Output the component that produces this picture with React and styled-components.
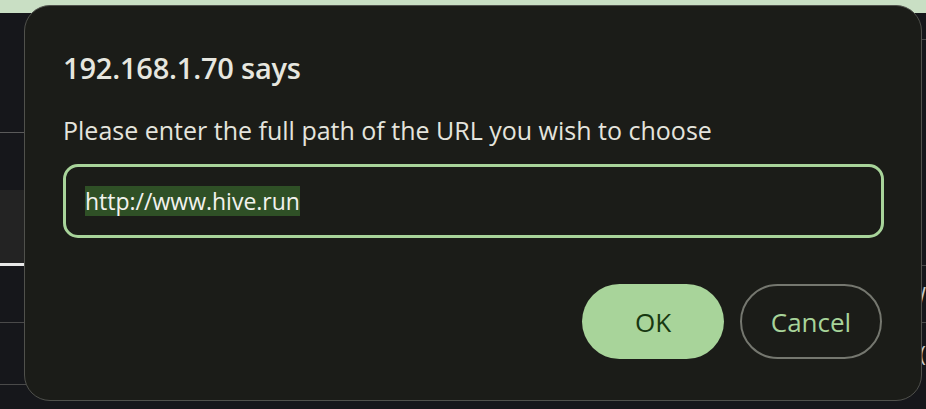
import React from 'react';
import styled, { createGlobalStyle } from 'styled-components';

const GlobalStyle = createGlobalStyle`
  html, body {
    margin: 0;
    padding: 0;
    background: #16171b;
    overflow: hidden;
  }
  body {
    font-family: 'Open Sans', 'Noto Sans', sans-serif;
  }
`;

const Page = styled.div`
  position: relative;
  width: 926px;
  height: 409px;
  display: flex;
  flex-direction: column;
  background: #16171b;
`;

const TopBand = styled.div`
  height: 13px;
  background: #c9dfc4;
`;

const Columns = styled.div`
  flex: 1;
  display: flex;
`;

const Column = styled.div`
  flex: 1;
  display: flex;
  flex-direction: column;
`;

// one row of the page lying under the dialog
const Row = styled.div`
  height: ${(p) => p.h}px;
  box-sizing: border-box;
  background: ${(p) => p.fill || 'transparent'};
  border-bottom: ${(p) => p.line || 'none'};
  display: flex;
  align-items: center;
  justify-content: flex-end;
  color: #c8c8c8;
  font-size: 22px;
`;

const Dialog = styled.div`
  position: absolute;
  left: 24px;
  top: 5px;
  width: 898px;
  height: 396px;
  box-sizing: border-box;
  background: #1b1c18;
  border: 1px solid #50514c;
  border-radius: 26px;
  padding: 42px 37px 0 38px;
  display: flex;
  flex-direction: column;
`;

const Title = styled.h1`
  margin: 0;
  font-size: 29px;
  line-height: 40px;
  font-weight: 600;
  letter-spacing: -0.2px;
  color: #e6e6df;
`;

const Message = styled.p`
  margin: 25px 0 0;
  font-size: 25px;
  line-height: 34px;
  color: #e4e4dd;
`;

const Field = styled.div`
  margin-top: 17px;
  height: 74px;
  box-sizing: border-box;
  border: 3px solid #a8d49a;
  border-radius: 15px;
  padding-left: 19px;
  display: flex;
  align-items: center;
`;

const Selected = styled.span`
  background: #2f5026;
  color: #f2f2ee;
  font-size: 23px;
  line-height: 30px;
`;

const Actions = styled.div`
  margin-top: 46px;
  display: flex;
  justify-content: flex-end;
  gap: 16px;
  padding-right: 2px;
`;

const Button = styled.button`
  width: 142px;
  height: 75px;
  box-sizing: border-box;
  border-radius: 38px;
  font-family: 'Open Sans', 'Noto Sans', sans-serif;
  font-size: 26px;
  padding: 0;
  background: ${(p) => (p.primary ? '#a8d49a' : 'transparent')};
  color: ${(p) => (p.primary ? '#173811' : '#a8d49a')};
  border: ${(p) => (p.primary ? 'none' : '2px solid #75776f')};
`;

export default function App() {
  return (
    <>
      <GlobalStyle />
      <Page>
        <TopBand />
        <Columns>
          <Column>
            <Row h={120} line="1px solid #5a5a5a" />
            <Row h={57} />
            <Row h={73} fill="#232323" />
            <Row h={3} fill="#e8e8e8" />
            <Row h={57} line="1px solid #4a4a4a" />
            <Row h={62} line="1px solid #4a4a4a" />
          </Column>
          <Column>
            <Row h={27} line="1px solid #4a4a4a" />
            <Row h={226} line="1px solid #4a4a4a" />
            <Row h={57} line="1px solid #4a4a4a">W</Row>
            <Row h={60}>(</Row>
          </Column>
        </Columns>
        <Dialog>
          <Title>192.168.1.70 says</Title>
          <Message>Please enter the full path of the URL you wish to choose</Message>
          <Field>
            <Selected>http://www.hive.run</Selected>
          </Field>
          <Actions>
            <Button primary>OK</Button>
            <Button>Cancel</Button>
          </Actions>
        </Dialog>
      </Page>
    </>
  );
}
